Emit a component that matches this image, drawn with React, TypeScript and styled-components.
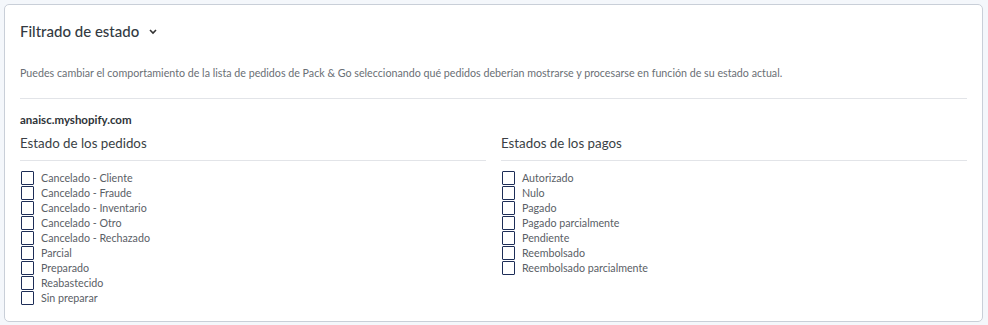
import styled, { createGlobalStyle } from "styled-components";

const GlobalStyle = createGlobalStyle`
  html, body {
    margin: 0;
    padding: 0;
    background: #f4f7fb;
    font-family: "Source Sans Pro", Lato, "Noto Sans", sans-serif;
  }
`;

const Page = styled.div`
  padding: 4px 5px 4px 4px;
`;

const Card = styled.section`
  background: #ffffff;
  border: 1px solid #c9cfd8;
  border-radius: 5px;
  padding: 17px 15px 16px 15px;
`;

const Header = styled.div`
  display: flex;
  align-items: center;
  gap: 9px;
  height: 17px;
`;

const Title = styled.h2`
  margin: 0;
  font-size: 15px;
  font-weight: 500;
  color: #333a42;
`;

const Description = styled.p`
  margin: 27px 0 0;
  font-size: 10.7px;
  line-height: 14px;
  color: #6a6f75;
`;

const Divider = styled.hr`
  border: 0;
  border-top: 1px solid #e2e4e8;
  margin: ${(p: { $top: number }) => p.$top}px 0 0;
`;

const Domain = styled.div`
  margin-top: 14px;
  font-size: 11.5px;
  font-weight: 700;
  line-height: 14px;
  color: #2e3338;
`;

const Columns = styled.div`
  display: grid;
  grid-template-columns: 1fr 1fr;
  column-gap: 15px;
  margin-top: 8px;
`;

const Heading = styled.h3`
  margin: 0;
  font-size: 13.3px;
  font-weight: 400;
  line-height: 17px;
  color: #3a3f45;
`;

const List = styled.ul`
  list-style: none;
  margin: 9px 0 0 1px;
  padding: 0;
`;

const Item = styled.li`
  display: flex;
  align-items: center;
  gap: 7px;
  height: 15px;
`;

const Box = styled.span`
  box-sizing: border-box;
  width: 13px;
  height: 14px;
  border: 1.5px solid #1d2d57;
  border-radius: 1px;
  flex: none;
`;

const Label = styled.span`
  font-size: 10.7px;
  color: #5a6066;
`;

const orders = [
  "Cancelado - Cliente",
  "Cancelado - Fraude",
  "Cancelado - Inventario",
  "Cancelado - Otro",
  "Cancelado - Rechazado",
  "Parcial",
  "Preparado",
  "Reabastecido",
  "Sin preparar",
];

const payments = [
  "Autorizado",
  "Nulo",
  "Pagado",
  "Pagado parcialmente",
  "Pendiente",
  "Reembolsado",
  "Reembolsado parcialmente",
];

function Group({ title, items }: { title: string; items: string[] }) {
  return (
    <div>
      <Heading>{title}</Heading>
      <Divider $top={8} />
      <List>
        {items.map((it) => (
          <Item key={it}>
            <Box />
            <Label>{it}</Label>
          </Item>
        ))}
      </List>
    </div>
  );
}

export default function App() {
  return (
    <Page>
      <GlobalStyle />
      <Card>
        <Header>
          <Title>Filtrado de estado</Title>
          <svg width="10" height="10" viewBox="0 0 10 10">
            <path d="M2 4l3 3 3-3" fill="none" stroke="#333" strokeWidth="1.6" />
          </svg>
        </Header>
        <Description>
          Puedes cambiar el comportamiento de la lista de pedidos de Pack &amp; Go seleccionando qué pedidos
          deberían mostrarse y procesarse en función de su estado actual.
        </Description>
        <Divider $top={18} />
        <Domain>anaisc.myshopify.com</Domain>
        <Columns>
          <Group title="Estado de los pedidos" items={orders} />
          <Group title="Estados de los pagos" items={payments} />
        </Columns>
      </Card>
    </Page>
  );
}
